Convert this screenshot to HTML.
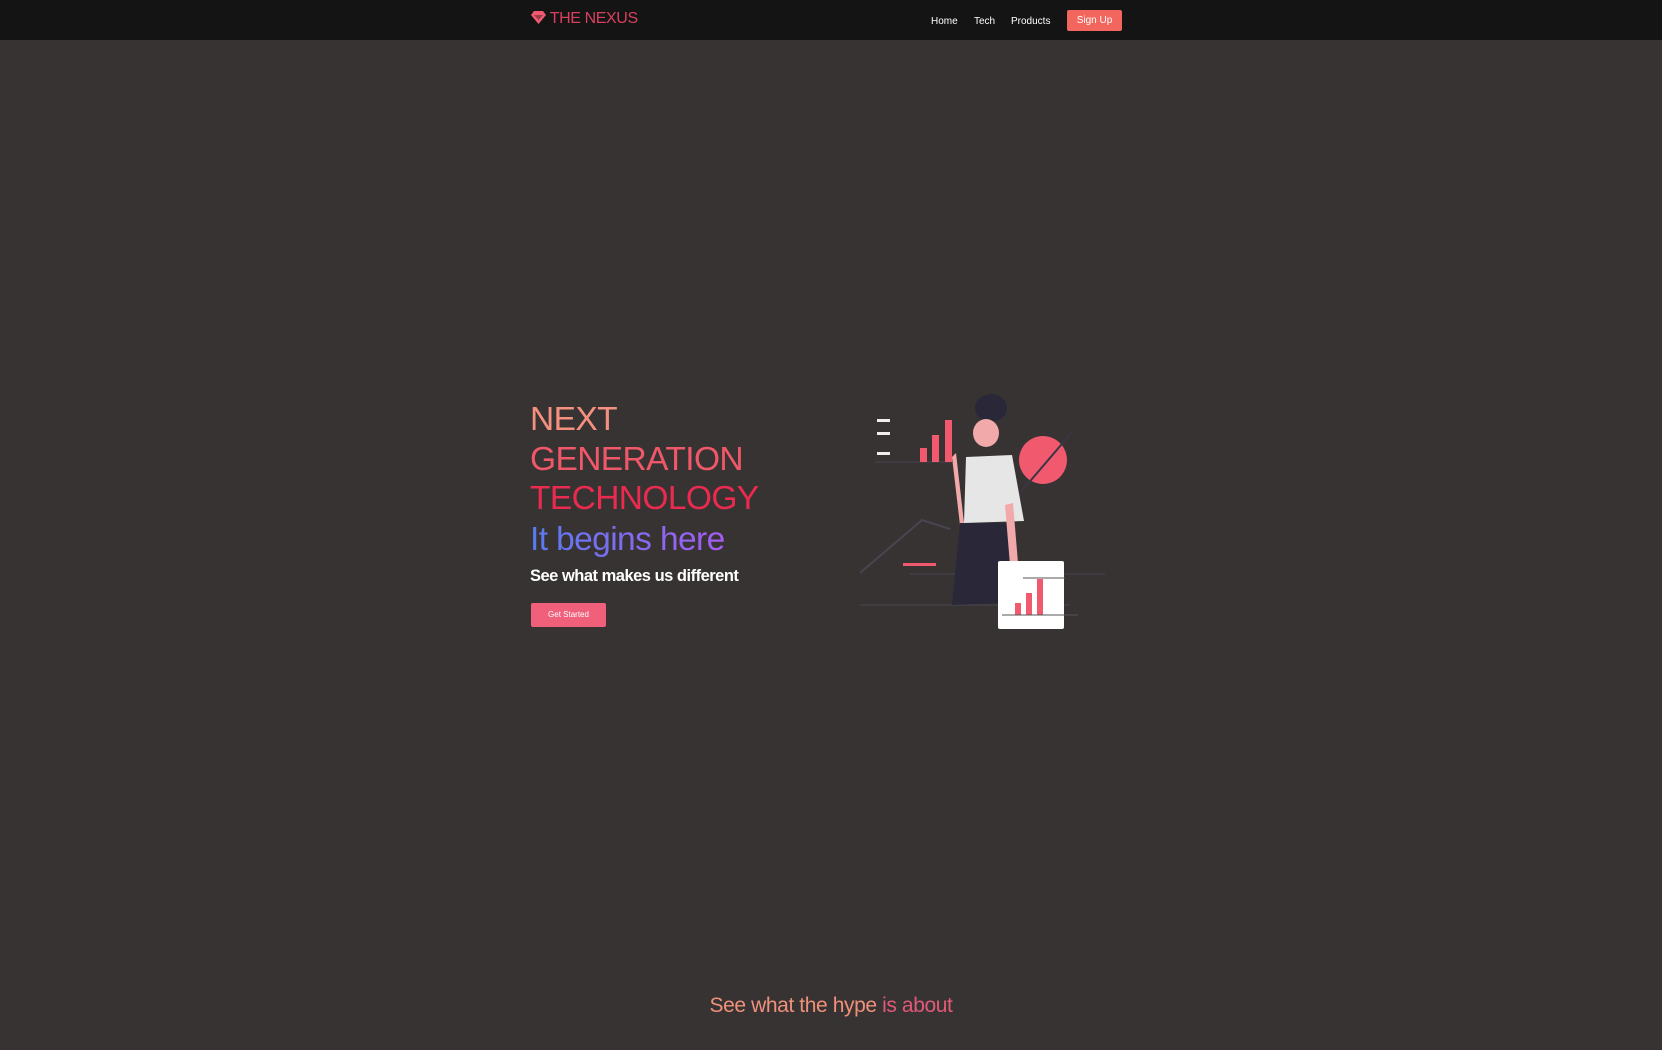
<!DOCTYPE html>
<html><head><meta charset="utf-8"><style>
body{margin:0;width:1662px;height:1050px;background:#383333;font-family:"Liberation Sans",sans-serif;overflow:hidden;position:relative}
nav{position:absolute;top:0;left:0;right:0;height:40px;background:#141414}
.logo{position:absolute;left:531px;top:10px;color:#d8405e;font-size:16px;letter-spacing:-0.4px}
.links{position:absolute;top:16px;font-size:10px;color:#fff}
.su{position:absolute;left:1067px;top:10px;width:55px;height:21px;background:#f2665e;border-radius:2px;color:#fff;font-size:10px;text-align:center;line-height:21px}
.h{position:absolute;left:530px;font-size:33.5px;line-height:40px;letter-spacing:-0.6px}
</style></head><body>
<nav>
<div class="logo"><svg width="15" height="13" viewBox="0 0 15 13" style="vertical-align:-1px"><path d="M3 0h9l3 4-7.5 9L0 4z" fill="#f0596e"/><path d="M3 4h9l-4.5 5z" fill="#141414" opacity=".4"/></svg> THE NEXUS</div>
<div class="links" style="left:931px">Home</div>
<div class="links" style="left:974px">Tech</div>
<div class="links" style="left:1011px">Products</div>
<div class="su">Sign Up</div>
</nav>
<div class="h" style="top:400px;color:#f59080">NEXT</div>
<div class="h" style="top:440px;color:#f0586a">GENERATION</div>
<div class="h" style="top:479px;color:#ea2a4e">TECHNOLOGY</div>
<div class="h" style="top:520px;background:linear-gradient(90deg,#5a7bf0,#a65cf0);-webkit-background-clip:text;color:transparent">It begins here</div>
<div style="position:absolute;left:530px;top:567px;color:#fff;font-size:16.5px;font-weight:bold;letter-spacing:-0.5px">See what makes us different</div>
<div style="position:absolute;left:531px;top:603px;width:75px;height:24px;background:#f0607a;border-radius:2px;color:#fff;font-size:8px;text-align:center;line-height:24px">Get Started</div>
<svg style="position:absolute;left:860px;top:393px" width="245" height="240" viewBox="0 0 245 240">
<line x1="15" y1="69" x2="90" y2="69" stroke="#4a4450" stroke-width="1"/>
<rect x="17" y="26" width="13" height="3" fill="#eee"/><rect x="17" y="39" width="13" height="3" fill="#eee"/><rect x="17" y="59" width="13" height="3" fill="#eee"/>
<rect x="60" y="55" width="7" height="14" fill="#f0596e"/><rect x="72" y="42" width="7" height="27" fill="#f0596e"/><rect x="85" y="27" width="7" height="42" fill="#f0596e"/>
<circle cx="183" cy="67" r="24" fill="#f0596e"/><line x1="160" y1="100" x2="213" y2="38" stroke="#3a3545" stroke-width="2"/>
<path d="M0 180 L62 127 L90 136" stroke="#4a4450" stroke-width="2" fill="none"/>
<rect x="43" y="170" width="33" height="3" fill="#f0596e"/>
<line x1="50" y1="181" x2="245" y2="181" stroke="#4a4450"/><line x1="0" y1="212" x2="210" y2="212" stroke="#4a4450"/>
<ellipse cx="131" cy="15" rx="16" ry="14" fill="#2a2838"/>
<ellipse cx="126" cy="40" rx="13" ry="14" fill="#f2a9a9"/>
<path d="M106 64 L152 62 L164 128 L104 130 Z" fill="#e6e6e6"/>
<path d="M96 60 L104 130 L100 132 L92 64Z" fill="#f2a9a9"/>
<path d="M100 130 L154 130 L150 210 L92 212 Z" fill="#2a2838"/>
<path d="M153 110 L158 170 L150 172 L145 112Z" fill="#f2a9a9"/>
<rect x="138" y="168" width="66" height="68" rx="2" fill="#fff"/>
<rect x="155" y="210" width="6" height="12" fill="#f0596e"/><rect x="166" y="200" width="6" height="22" fill="#f0596e"/><rect x="177" y="186" width="6" height="36" fill="#f0596e"/>
<line x1="142" y1="222" x2="218" y2="222" stroke="#555"/><line x1="163" y1="185" x2="205" y2="185" stroke="#555"/>
</svg>
<div style="position:absolute;left:0;width:1662px;top:994px;text-align:center;font-size:21px;letter-spacing:-0.4px"><span style="color:#f0907a">See what the hype </span><span style="color:#e05a78">is about</span></div>
</body></html>
